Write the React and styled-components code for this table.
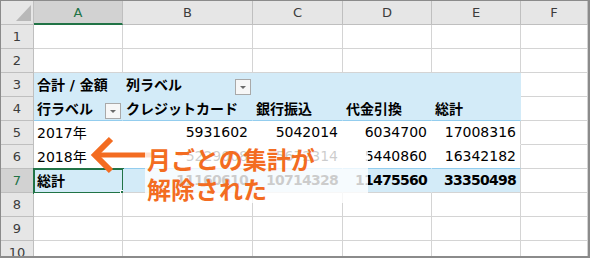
import React from 'react';
import styled, { createGlobalStyle } from 'styled-components';

const GRID = '#d4d4d4';
const HEAD_BG = '#e6e6e6';
const HEAD_ACTIVE_BG = '#d2d2d2';
const HEAD_LINE = '#bfbfbf';
const PIVOT = '#d3ebf8';
const PIVOT_LINE = '#93cdee';
const EXCEL_GREEN = '#217346';
const ORANGE = '#f36c21';

const GlobalStyle = createGlobalStyle`
  html, body { margin: 0; padding: 0; background: #fff; }
  body { font-family: "DejaVu Sans", "Noto Sans CJK JP", sans-serif; }
`;

const Frame = styled.div`
  position: relative;
  width: 590px;
  height: 258px;
  box-sizing: border-box;
  border: 1px solid #8b8b8b;
  border-right-width: 2px;
  border-bottom-width: 2px;
  overflow: hidden;
  background: #fff;
`;

const Sheet = styled.div`
  display: grid;
  grid-template-columns: 33px 89px 130px 90px 89px 89px 67px;
  grid-auto-rows: 24px;
`;

const HeadBase = styled.div`
  box-sizing: border-box;
  display: flex;
  align-items: center;
  justify-content: center;
  font-family: "DejaVu Sans", sans-serif;
  font-size: 13px;
  background: ${p => (p.$active ? HEAD_ACTIVE_BG : HEAD_BG)};
  color: ${p => (p.$active ? EXCEL_GREEN : '#3c3c3c')};
  border-right: 1px solid ${HEAD_LINE};
  border-bottom: 1px solid ${HEAD_LINE};
`;

const Corner = styled(HeadBase)`
  justify-content: flex-end;
  align-items: flex-end;
  padding: 0 2px 3px 0;
`;

const CornerMark = styled.span`
  width: 0;
  height: 0;
  border-left: 15px solid transparent;
  border-bottom: 16px solid #b8b8b8;
`;

const ColHead = styled(HeadBase)`
  border-bottom: ${p => (p.$active ? `2px solid ${EXCEL_GREEN}` : `1px solid ${HEAD_LINE}`)};
`;

const RowHead = styled(HeadBase)``;

const Cell = styled.div`
  position: relative;
  box-sizing: border-box;
  display: flex;
  align-items: center;
  justify-content: ${p => (p.$align === 'right' ? 'flex-end' : 'flex-start')};
  padding: 0 4px 2px 3px;
  font-size: 14px;
  font-weight: ${p => (p.$bold ? 700 : 400)};
  letter-spacing: ${p => (p.$bold && p.$align === 'right' ? '-0.75px' : 'normal')};
  color: #000;
  white-space: nowrap;
  background: ${p => p.$fill};
  border-right: 1px solid ${p => p.$vline};
  border-bottom: 1px solid ${p => p.$hline};
`;

const FilterButton = styled.span`
  margin-left: auto;
  margin-right: -3px;
  margin-bottom: -1px;
  align-self: flex-end;
  flex: none;
  width: 16px;
  height: 16px;
  box-sizing: border-box;
  border: 1px solid #a9a9a9;
  background: #f7f7f7;
  display: flex;
  justify-content: center;
  align-items: flex-start;
  padding-top: 6px;

  &::after {
    content: '';
    border-left: 3px solid transparent;
    border-right: 3px solid transparent;
    border-top: 3px solid #6a6a6a;
  }
`;

const Selection = styled.span`
  position: absolute;
  left: -1px;
  top: -1px;
  right: -2px;
  bottom: -2px;
  border: 2px solid ${EXCEL_GREEN};
  pointer-events: none;

  &::after {
    content: '';
    position: absolute;
    right: -5px;
    bottom: -5px;
    width: 6px;
    height: 6px;
    background: ${EXCEL_GREEN};
    box-shadow: 0 0 0 1px #fff;
  }
`;

const Arrow = styled.svg`
  position: absolute;
  left: 87px;
  top: 133px;
  overflow: visible;
`;

const Callout = styled.div`
  position: absolute;
  left: 144px;
  top: 139px;
  width: 223px;
  height: 63px;
  box-sizing: border-box;
  padding: 4px 0 0 2px;
  background: rgba(255, 255, 255, 0.8);
  font-family: "Noto Sans CJK JP", sans-serif;
  font-weight: 700;
  font-size: 24px;
  line-height: 30px;
  color: ${ORANGE};
  white-space: nowrap;
`;

// Look of the pivot-table rows (columns A–E); column F stays a plain grid cell.
const TONES = {
  plain: { fill: '#fff', vline: GRID, hline: GRID, edge: GRID },
  head: { fill: PIVOT, vline: PIVOT, hline: PIVOT, edge: PIVOT },
  headLast: { fill: PIVOT, vline: PIVOT, hline: PIVOT_LINE, edge: PIVOT },
  body: { fill: '#fff', vline: '#fff', hline: '#fff', edge: GRID },
  bodyLast: { fill: '#fff', vline: '#fff', hline: PIVOT_LINE, edge: GRID },
  total: { fill: PIVOT, vline: PIVOT, hline: GRID, edge: GRID },
};

const COLUMNS = ['A', 'B', 'C', 'D', 'E', 'F'];
const ACTIVE_COL = 'A';
const ACTIVE_ROW = 7;

const L = (t, extra = {}) => ({ t, ...extra });
const N = t => ({ t, align: 'right' });
const NB = t => ({ t, align: 'right', bold: true });

const ROWS = [
  { n: 1, tone: 'plain', cells: [] },
  { n: 2, tone: 'plain', cells: [] },
  {
    n: 3,
    tone: 'head',
    cells: [L('合計 / 金額', { bold: true }), L('列ラベル', { bold: true, filter: true })],
  },
  {
    n: 4,
    tone: 'headLast',
    cells: [
      L('行ラベル', { bold: true, filter: true }),
      L('クレジットカード', { bold: true }),
      L('銀行振込', { bold: true }),
      L('代金引換', { bold: true }),
      L('総計', { bold: true }),
    ],
  },
  {
    n: 5,
    tone: 'body',
    cells: [L('2017年'), N('5931602'), N('5042014'), N('6034700'), N('17008316')],
  },
  {
    n: 6,
    tone: 'bodyLast',
    cells: [L('2018年'), N('5229008'), N('5672314'), N('5440860'), N('16342182')],
  },
  {
    n: 7,
    tone: 'total',
    cells: [
      L('総計', { bold: true, selected: true }),
      NB('11160610'),
      NB('10714328'),
      NB('11475560'),
      NB('33350498'),
    ],
  },
  { n: 8, tone: 'plain', cells: [] },
  { n: 9, tone: 'plain', cells: [] },
  { n: 10, tone: 'plain', cells: [] },
];

function SheetRow({ row }) {
  return (
    <>
      <RowHead $active={row.n === ACTIVE_ROW}>{row.n}</RowHead>
      {COLUMNS.map((col, i) => {
        const inPivot = i < 5;
        const tone = TONES[inPivot ? row.tone : 'plain'];
        const cell = row.cells[i] || {};
        return (
          <Cell
            key={col}
            $fill={tone.fill}
            $vline={i === 4 ? tone.edge : tone.vline}
            $hline={tone.hline}
            $align={cell.align}
            $bold={cell.bold}
          >
            {cell.t}
            {cell.filter && <FilterButton />}
            {cell.selected && <Selection />}
          </Cell>
        );
      })}
    </>
  );
}

export default function App() {
  return (
    <>
      <GlobalStyle />
      <Frame>
        <Sheet>
          <Corner>
            <CornerMark />
          </Corner>
          {COLUMNS.map(c => (
            <ColHead key={c} $active={c === ACTIVE_COL}>
              {c}
            </ColHead>
          ))}
          {ROWS.map(r => (
            <SheetRow key={r.n} row={r} />
          ))}
        </Sheet>

        <Arrow width="66" height="44" viewBox="88 134 66 44">
          <path d="M111 139 L95 155 L111 171" fill="none" stroke={ORANGE} strokeWidth="6" />
          <path d="M97 155 H152" fill="none" stroke={ORANGE} strokeWidth="5" />
        </Arrow>

        <Callout>
          月ごとの集計が
          <br />
          解除された
        </Callout>
      </Frame>
    </>
  );
}
